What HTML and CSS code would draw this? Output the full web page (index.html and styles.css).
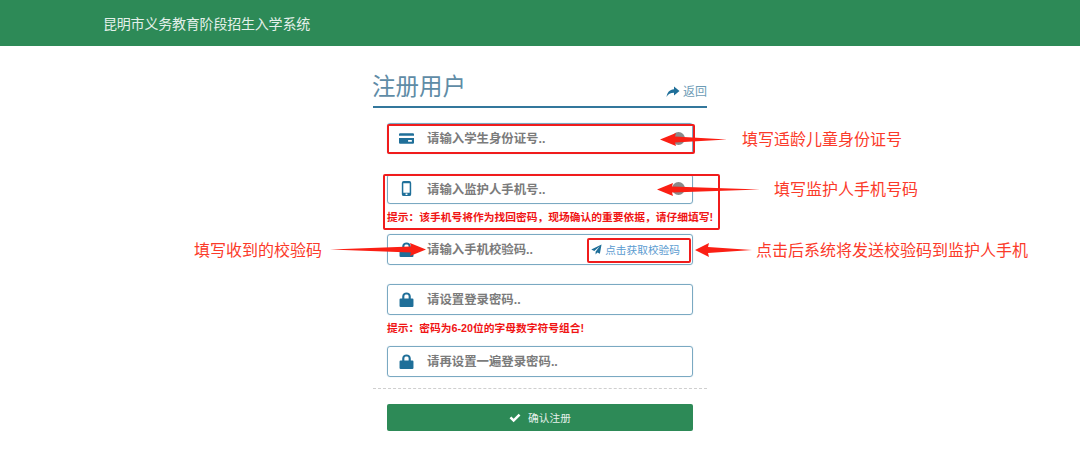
FILE: index.html
```html
<!DOCTYPE html>
<html lang="zh">
<head>
<meta charset="utf-8">
<title>注册用户</title>
<link rel="stylesheet" href="styles.css">
</head>
<body>
<header class="topbar"><span class="topbar-title">昆明市义务教育阶段招生入学系统</span></header>
<main class="panel">
  <div class="panel-head">
    <h1 class="panel-title">注册用户</h1>
    <a class="back-link">
      <svg class="back-icon" viewBox="0 0 14 12"><path d="M8 0.5 L13.5 5 L8 9.5 V6.8 C4.5 6.8 2.2 8 0.5 11 C1 6.5 3.5 3.6 8 3.2 Z"/></svg>
      <span>返回</span>
    </a>
  </div>
  <form class="form">
    <div class="field field-first">
      <svg class="field-icon" viewBox="0 0 14 14"><path d="M1 2 H13 A1 1 0 0 1 14 3 V4.5 H0 V3 A1 1 0 0 1 1 2 Z M0 6.5 H14 V11 A1 1 0 0 1 13 12 H1 A1 1 0 0 1 0 11 Z M8.5 8.5 V10 H12 V8.5 Z" fill-rule="evenodd"/></svg>
      <span class="placeholder">请输入学生身份证号..</span>
      <svg class="field-eye" viewBox="0 0 12 12"><circle cx="6" cy="6" r="6"/><rect x="2" y="5.2" width="8" height="1.6" fill="#c9c9c9"/></svg>
    </div>
    <div class="field field-phone">
      <svg class="field-icon" viewBox="0 0 14 16"><path d="M4 0 H10 A2 2 0 0 1 12 2 V14 A2 2 0 0 1 10 16 H4 A2 2 0 0 1 2 14 V2 A2 2 0 0 1 4 0 Z M3.6 2.4 V12.4 H10.4 V2.4 Z M6 13.3 V14.8 H8 V13.3 Z" fill-rule="evenodd"/></svg>
      <span class="placeholder">请输入监护人手机号..</span>
      <svg class="field-eye" viewBox="0 0 12 12"><circle cx="6" cy="6" r="6"/><rect x="2" y="5.2" width="8" height="1.6" fill="#c9c9c9"/></svg>
    </div>
    <p class="hint hint-long">提示&#xFF1A;该手机号将作为找回密码&#xFF0C;现场确认的重要依据&#xFF0C;请仔细填写!</p>
    <div class="field">
      <svg class="field-icon" viewBox="0 0 14 14"><path d="M3 6 V4.2 C3 1.8 4.8 0.5 7 0.5 S11 1.8 11 4.2 V6 H12.5 A1 1 0 0 1 13.5 7 V13 A1 1 0 0 1 12.5 14 H1.5 A1 1 0 0 1 0.5 13 V7 A1 1 0 0 1 1.5 6 Z M5 6 H9 V4.2 C9 3 8.2 2.4 7 2.4 S5 3 5 4.2 Z" fill-rule="evenodd"/></svg>
      <span class="placeholder">请输入手机校验码..</span>
      <a class="send-code">
        <svg class="send-icon" viewBox="0 0 12 12"><path d="M11.5 0.5 L0.3 6 L3.6 7.6 L9.5 2.5 L5 8.4 V11.5 L6.9 9.3 L9.7 10.6 Z"/></svg>
        <span>点击获取校验码</span>
      </a>
    </div>
    <div class="field field-gap">
      <svg class="field-icon" viewBox="0 0 14 14"><path d="M3 6 V4.2 C3 1.8 4.8 0.5 7 0.5 S11 1.8 11 4.2 V6 H12.5 A1 1 0 0 1 13.5 7 V13 A1 1 0 0 1 12.5 14 H1.5 A1 1 0 0 1 0.5 13 V7 A1 1 0 0 1 1.5 6 Z M5 6 H9 V4.2 C9 3 8.2 2.4 7 2.4 S5 3 5 4.2 Z" fill-rule="evenodd"/></svg>
      <span class="placeholder">请设置登录密码..</span>
    </div>
    <p class="hint hint-short">提示&#xFF1A;密码为6-20位的字母数字符号组合!</p>
    <div class="field">
      <svg class="field-icon" viewBox="0 0 14 14"><path d="M3 6 V4.2 C3 1.8 4.8 0.5 7 0.5 S11 1.8 11 4.2 V6 H12.5 A1 1 0 0 1 13.5 7 V13 A1 1 0 0 1 12.5 14 H1.5 A1 1 0 0 1 0.5 13 V7 A1 1 0 0 1 1.5 6 Z M5 6 H9 V4.2 C9 3 8.2 2.4 7 2.4 S5 3 5 4.2 Z" fill-rule="evenodd"/></svg>
      <span class="placeholder">请再设置一遍登录密码..</span>
    </div>
    <div class="divider"></div>
    <button class="submit" type="button">
      <svg class="submit-icon" viewBox="0 0 13 11"><path d="M0.5 5.8 L2.5 3.8 L5 6.2 L10.5 0.7 L12.5 2.7 L5 10.2 Z"/></svg>
      <span>确认注册</span>
    </button>
  </form>
</main>

<div class="markup">
  <div class="mark-box mark-a"></div>
  <div class="mark-box mark-b"></div>
  <div class="mark-box mark-c"></div>
  <svg class="mark-arrows" viewBox="0 0 1080 460">
    <path d="M727 139.5 L675 136.5 L676 133 L660 139.5 L676 146 L675 142.5 Z"/>
    <path d="M760 189.5 L672 186.5 L673 183 L657 189.5 L673 196 L672 192.5 Z"/>
    <path d="M330 249.5 L411 246.5 L410 243 L426 249.5 L410 256 L411 252.5 Z"/>
    <path d="M752 250 L708 247 L709 243 L695 250 L709 257 L708 253 Z"/>
  </svg>
  <span class="note note-a">填写适龄儿童身份证号</span>
  <span class="note note-b">填写监护人手机号码</span>
  <span class="note note-c">填写收到的校验码</span>
  <span class="note note-d">点击后系统将发送校验码到监护人手机</span>
</div>
</body>
</html>
```
FILE: styles.css
```css
* { box-sizing: border-box; }
html, body { margin: 0; padding: 0; }
body {
  position: relative;
  height: 460px;
  overflow: hidden;
  background: #fff;
  font-family: "Liberation Sans", "Noto Sans CJK SC", sans-serif;
}
.topbar {
  height: 46px;
  background: #2d8a57;
  display: flex;
  align-items: center;
  padding-left: 103px;
  padding-bottom: 1px;
}
.topbar-title { color: #e4f0ea; font-size: 14px; letter-spacing: -0.2px; }
.panel { width: 334px; margin: 0 auto; }
.panel-head {
  height: 62px;
  display: flex;
  justify-content: space-between;
  align-items: flex-end;
  border-bottom: 2px solid #33779c;
  padding-bottom: 6px;
}
.panel-title {
  margin: 0 0 0 -1px;
  font-size: 23.5px;
  line-height: 26px;
  font-weight: 400;
  color: #5f8ca6;
}
.back-link {
  display: flex;
  align-items: center;
  gap: 3px;
  font-size: 12px;
  line-height: 16px;
  color: #6d9cb6;
}
.back-icon { width: 14px; height: 12px; fill: #1f6f99; }
.form { padding: 15px 14px 0; display: flex; flex-direction: column; }
.field {
  height: 31px;
  flex: none;
  border: 1px solid #7aa9c2;
  border-radius: 3px;
  box-shadow: 0 0 1px #a3c4d6;
  display: flex;
  align-items: center;
  padding-left: 11px;
  padding-bottom: 1px;
}
.field-first { margin-bottom: 20px; }
.field-phone { height: 30px; }
.field-gap { margin-top: 19px; }
.field-icon { width: 15px; height: 15px; fill: #1f6f99; flex: none; }
.placeholder {
  margin-left: 13px;
  font-size: 12.4px;
  font-weight: 700;
  color: #7b7b7b;
}
.field-eye { width: 13px; height: 13px; fill: #8a8a8a; margin-left: auto; margin-right: 7px; }
.send-code {
  margin-left: auto;
  margin-right: 12px;
  display: flex;
  align-items: center;
  gap: 3px;
  font-size: 10.7px;
  color: #5b9bd0;
}
.send-icon { width: 11px; height: 11px; fill: #1f6f99; }
.hint {
  margin: 0;
  padding-top: 7px;
  line-height: 12px;
  font-size: 10.75px;
  font-weight: 700;
  color: #f01414;
  white-space: nowrap;
}
.hint-long { height: 30px; }
.hint-short { height: 31px; }
.divider { margin: 11px -14px 0; border-top: 1px dashed #cfcfcf; height: 16px; }
.submit {
  height: 27px;
  border: 0;
  border-radius: 2px;
  background: #2d8a57;
  color: #e4f0ea;
  font-family: inherit;
  font-size: 10.7px;
  display: flex;
  align-items: center;
  justify-content: center;
  gap: 7px;
  padding: 0;
}
.submit-icon { width: 12px; height: 10px; fill: #fff; }

.markup { position: absolute; inset: 0; pointer-events: none; }
.mark-box { position: absolute; border: 2px solid #f01c1c; border-radius: 2px; }
.mark-a { left: 387px; top: 124px; width: 308px; height: 30px; }
.mark-b { left: 383px; top: 174px; width: 337px; height: 56px; }
.mark-c { left: 587px; top: 238px; width: 104px; height: 25px; }
.mark-arrows { position: absolute; left: 0; top: 0; width: 1080px; height: 460px; fill: #fb1f14; }
.note { position: absolute; font-size: 16px; line-height: 22px; color: #fb3a2a; white-space: nowrap; }
.note-a { left: 742px; top: 129px; }
.note-b { left: 774px; top: 179px; }
.note-c { left: 194px; top: 240px; }
.note-d { left: 756px; top: 240px; }
```
